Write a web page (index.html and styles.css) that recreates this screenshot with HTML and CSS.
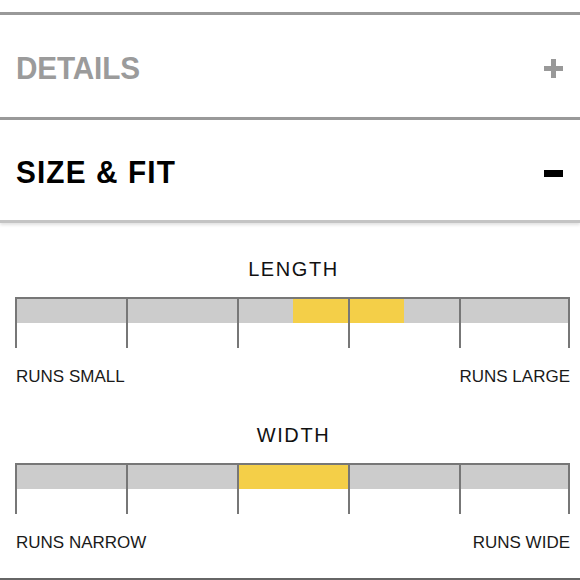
FILE: index.html
```html
<!DOCTYPE html>
<html lang="en">
<head>
<meta charset="utf-8">
<title>Size &amp; Fit</title>
<link rel="stylesheet" href="styles.css">
</head>
<body>
<div class="page">
  <div class="acc acc-first">
    <div class="acc-head acc-closed">
      <span class="acc-title">DETAILS</span>
      <span class="icon-plus" aria-hidden="true"></span>
    </div>
  </div>
  <div class="acc acc-open">
    <div class="acc-head">
      <span class="acc-title">SIZE &amp; FIT</span>
      <span class="icon-minus" aria-hidden="true"></span>
    </div>
  </div>
  <div class="fit">
    <div class="meter">
      <div class="meter-title"><span>LENGTH</span></div>
      <div class="scale">
        <div class="mark" style="left:50%;width:20%"></div>
        <div class="seg"></div><div class="seg"></div><div class="seg"></div><div class="seg"></div><div class="seg"></div>
      </div>
      <div class="labels"><span>RUNS SMALL</span><span>RUNS LARGE</span></div>
    </div>
    <div class="meter">
      <div class="meter-title"><span>WIDTH</span></div>
      <div class="scale">
        <div class="mark" style="left:40%;width:20%"></div>
        <div class="seg"></div><div class="seg"></div><div class="seg"></div><div class="seg"></div><div class="seg"></div>
      </div>
      <div class="labels"><span>RUNS NARROW</span><span>RUNS WIDE</span></div>
    </div>
  </div>
</div>
</body>
</html>
```
FILE: styles.css
```css
* { box-sizing: border-box; }
html, body { margin: 0; padding: 0; background: #fff; }
body {
  width: 580px;
  height: 580px;
  overflow: hidden;
  font-family: "Liberation Sans", Arial, sans-serif;
  color: #1a1a1a;
}
.page { padding-top: 12px; }
.acc { border-top: 3px solid #999; }
.acc-head {
  display: flex;
  align-items: center;
  justify-content: space-between;
  padding: 4px 17px 0 16px;
}
.acc-first .acc-head { height: 102px; }
.acc-open .acc-head { height: 100px; padding-top: 4px; }
.acc-open {
  border-bottom: 3px solid #c4c4c4;
  box-shadow: 0 2px 3px rgba(0,0,0,0.12);
  position: relative;
}
.acc-title {
  display: inline-block;
  font-size: 32px;
  font-weight: 700;
  transform: scaleX(0.93);
  transform-origin: left center;
}
.acc-closed .acc-title { color: #9b9b9b; letter-spacing: -0.2px; }
.acc-open .acc-title { color: #000; letter-spacing: 1.2px; }
.icon-plus {
  width: 19px;
  height: 19px;
  background:
    linear-gradient(#999, #999) center / 19px 5px no-repeat,
    linear-gradient(#999, #999) center / 5px 19px no-repeat;
}
.icon-minus {
  width: 19px;
  height: 7px;
  background: #000;
  margin-top: 2px;
}
.fit {
  padding: 34px 10px 0 15px;
  border-bottom: 2px solid #666;
  height: 357px;
}
.meter + .meter { margin-top: 35px; }
.meter-title {
  text-align: center;
  font-size: 20px;
  line-height: 24px;
  letter-spacing: 1.6px;
  padding-left: 2px;
  color: #111;
}
.scale {
  margin-top: 16px;
  position: relative;
  height: 51px;
  border-top: 2px solid #777;
  display: grid;
  grid-template-columns: repeat(5, 1fr);
  background: linear-gradient(#cccccc, #cccccc) top / 100% 24px no-repeat;
}
.mark {
  position: absolute;
  top: 0;
  height: 24px;
  background: #f4cf48;
}
.seg {
  position: relative;
  z-index: 1;
  border-left: 2px solid #777;
}
.seg:last-child { border-right: 2px solid #777; }
.labels {
  display: flex;
  justify-content: space-between;
  margin-top: 18px;
  padding-left: 1px;
  font-size: 17px;
  line-height: 22px;
  color: #1a1a1a;
}
```
